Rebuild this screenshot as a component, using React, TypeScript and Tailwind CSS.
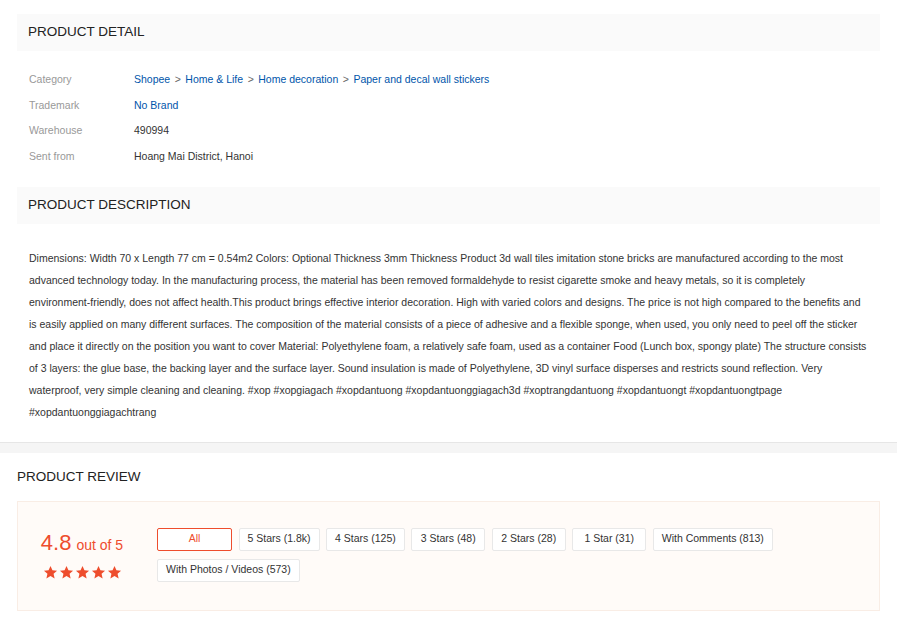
import React from 'react';

const details = [
  { label: 'Category', value: null },
  { label: 'Trademark', value: 'No Brand', link: true },
  { label: 'Warehouse', value: '490994' },
  { label: 'Sent from', value: 'Hoang Mai District, Hanoi' },
];

const crumbs = ['Shopee', 'Home & Life', 'Home decoration', 'Paper and decal wall stickers'];

const description =
  'Dimensions: Width 70 x Length 77 cm = 0.54m2 Colors: Optional Thickness 3mm Thickness Product 3d wall tiles imitation stone bricks are manufactured according to the most advanced technology today. In the manufacturing process, the material has been removed formaldehyde to resist cigarette smoke and heavy metals, so it is completely environment-friendly, does not affect health.This product brings effective interior decoration. High with varied colors and designs. The price is not high compared to the benefits and is easily applied on many different surfaces. The composition of the material consists of a piece of adhesive and a flexible sponge, when used, you only need to peel off the sticker and place it directly on the position you want to cover Material: Polyethylene foam, a relatively safe foam, used as a container Food (Lunch box, spongy plate) The structure consists of 3 layers: the glue base, the backing layer and the surface layer. Sound insulation is made of Polyethylene, 3D vinyl surface disperses and restricts sound reflection. Very waterproof, very simple cleaning and cleaning. #xop #xopgiagach #xopdantuong #xopdantuonggiagach3d #xoptrangdantuong #xopdantuongt #xopdantuongtpage #xopdantuonggiagachtrang';

const filters = [
  'All',
  '5 Stars (1.8k)',
  '4 Stars (125)',
  '3 Stars (48)',
  '2 Stars (28)',
  '1 Star (31)',
  'With Comments (813)',
  'With Photos / Videos (573)',
];

const Star = () => (
  <svg viewBox="0 0 24 24" className="w-[15px] h-[15px]" fill="#ee4d2d">
    <path d="M12 1.5l3.1 6.9 7.4.7-5.6 5 1.7 7.4L12 17.6l-6.6 3.9 1.7-7.4-5.6-5 7.4-.7z" />
  </svg>
);

const SectionTitle: React.FC<{ children: React.ReactNode }> = ({ children }) => (
  <div className="bg-[#fafafa] h-[37px] px-[11px] flex items-center text-[13.5px] text-[#222] uppercase">
    {children}
  </div>
);

export default function App() {
  return (
    <div className="w-full min-h-screen bg-white font-['Liberation_Sans',Arial,sans-serif]">
      <div className="px-[17px] pt-[14px]">
        {/* Product detail */}
        <SectionTitle>Product Detail</SectionTitle>
        <div className="pt-[16px] pb-[17px] px-[12px] text-[10.5px]">
          {details.map((d) => (
            <div key={d.label} className="flex items-center h-[25.7px]">
              <div className="w-[105px] text-[#999]">{d.label}</div>
              {d.value === null ? (
                <div className="flex items-center text-[#0055aa]">
                  {crumbs.map((c, i) => (
                    <React.Fragment key={c}>
                      {i > 0 && <span className="mx-[4.5px] text-[#666]">&gt;</span>}
                      <span>{c}</span>
                    </React.Fragment>
                  ))}
                </div>
              ) : (
                <div className={d.link ? 'text-[#0055aa]' : 'text-[#333]'}>{d.value}</div>
              )}
            </div>
          ))}
        </div>

        {/* Product description */}
        <SectionTitle>Product Description</SectionTitle>
        <div className="pt-[23px] pb-[19px] px-[12px]">
          <p className="text-[10.5px] leading-[22px] text-[#333]">{description}</p>
        </div>
      </div>

      <div className="h-[11px] bg-[#f5f5f5] border-t border-[#e6e6e6]" />

      {/* Product review */}
      <div className="px-[17px]">
        <div className="h-[48px] flex items-center text-[13.5px] text-[#222] uppercase">Product Review</div>
        <div className="bg-[#fffbf8] border border-[#f9ede5] h-[110px] pt-[26px] pl-[21px] pr-[20px] flex items-start">
          <div className="w-[86px] mr-[32px] flex flex-col items-center text-[#ee4d2d]">
            <div className="mt-[3px] leading-[24px] whitespace-nowrap">
              <span className="text-[22px]">4.8</span>
              <span className="text-[14px] ml-[5px]">out of 5</span>
            </div>
            <div className="flex gap-px mt-[8px]">
              <Star />
              <Star />
              <Star />
              <Star />
              <Star />
            </div>
          </div>
          <div className="flex flex-wrap gap-x-[6.5px] gap-y-[8px] flex-1">
            {filters.map((f, i) => (
              <div
                key={f}
                className={
                  i === 0
                    ? 'h-[23px] min-w-[75px] px-[8px] flex items-center justify-center bg-white border border-[#ee4d2d] text-[#ee4d2d] text-[10.5px] rounded-[2px]'
                    : 'h-[23px] min-w-[74px] px-[8px] flex items-center justify-center bg-white border border-[#e8e8e8] text-[#333] text-[10.5px] rounded-[2px]'
                }
              >
                {f}
              </div>
            ))}
          </div>
        </div>
      </div>
    </div>
  );
}
